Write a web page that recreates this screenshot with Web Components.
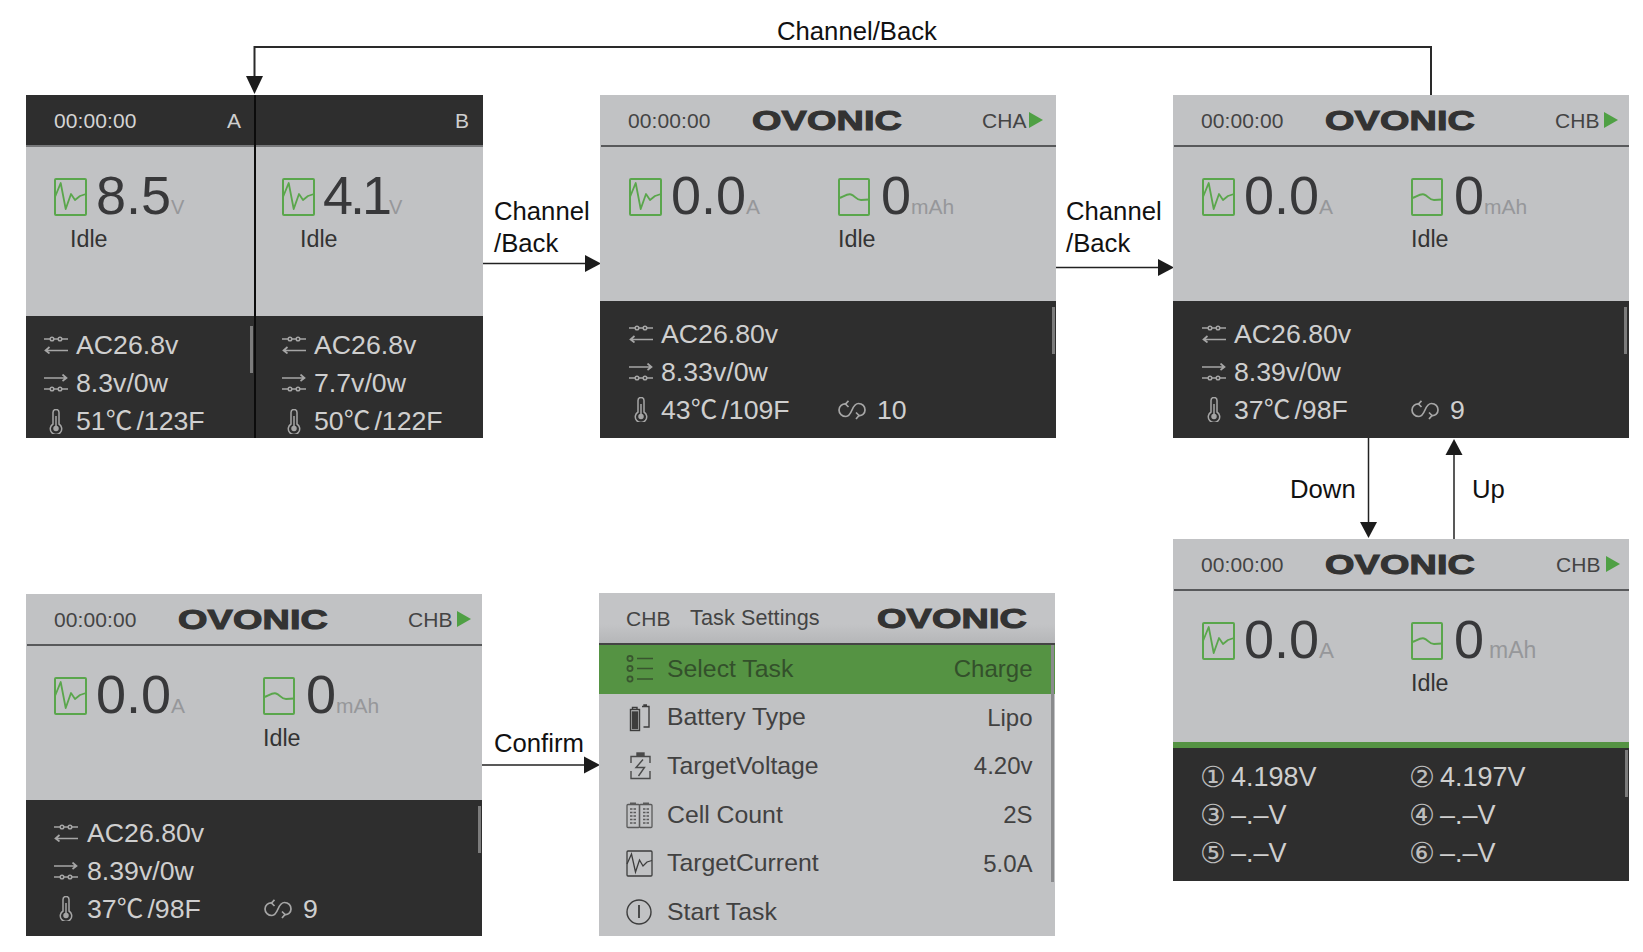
<!DOCTYPE html>
<html lang="en"><head><meta charset="utf-8"><title>OVONIC charger screens</title>
<style>
html,body{margin:0;background:#fff;font-family:"Liberation Sans",Arial,sans-serif}
ov-stat b{font-weight:normal;letter-spacing:4px}
</style></head><body>
<ov-diagram>
  <ov-label style="--x:777px;--y:31px">Channel/Back</ov-label>
  <ov-label style="--x:494px;--y:211px">Channel</ov-label>
  <ov-label style="--x:494px;--y:243px">/Back</ov-label>
  <ov-label style="--x:1066px;--y:211px">Channel</ov-label>
  <ov-label style="--x:1066px;--y:243px">/Back</ov-label>
  <ov-label style="--x:1290px;--y:489px">Down</ov-label>
  <ov-label style="--x:1472px;--y:489px">Up</ov-label>
  <ov-label style="--x:494px;--y:743px">Confirm</ov-label>

  <ov-frame style="--x:26px;--y:95px;--w:457px">
    <ov-pane style="--main:170px;--w:228px;--edge:2px">
      <ov-topbar slot="top" mode="letter" time="00:00:00" letter="A" style="--letter-x:201px"></ov-topbar>
      <ov-readings slot="main" style="--pad:28px;--col:180px">
        <ov-reading icon="pulse" value="8.5" unit="V" idle="Idle" style="--idle-x:16px;--unit-size:20px"></ov-reading>
      </ov-readings>
      <ov-stats slot="foot" style="--top:10px;--bar-x:224px;--bar-y:10px">
        <ov-stat icon="in" style="--icon:18px;--text:50px">AC26.8v</ov-stat>
        <ov-stat icon="out" style="--icon:18px;--text:50px">8.3v/0w</ov-stat>
        <ov-stat icon="temp" style="--icon:18px;--text:50px">51<b>℃</b>/123F</ov-stat>
      </ov-stats>
    </ov-pane>
    <ov-pane style="--main:170px;--w:227px">
      <ov-topbar slot="top" mode="letter" letter="B" style="--letter-x:199px"></ov-topbar>
      <ov-readings slot="main" style="--pad:26px;--col:180px">
        <ov-reading icon="pulse" value="4.1" unit="V" idle="Idle" style="--idle-x:18px;--unit-size:20px;--n-ls:-3px;--n-gap:8px"></ov-reading>
      </ov-readings>
      <ov-stats slot="foot" style="--top:10px;--bar-x:-100px">
        <ov-stat icon="in" style="--icon:26px;--text:58px">AC26.8v</ov-stat>
        <ov-stat icon="out" style="--icon:26px;--text:58px">7.7v/0w</ov-stat>
        <ov-stat icon="temp" style="--icon:26px;--text:58px">50<b>℃</b>/122F</ov-stat>
      </ov-stats>
    </ov-pane>
  </ov-frame>

  <ov-frame style="--x:600px;--y:95px;--w:456px">
    <ov-pane style="--main:155px">
      <ov-topbar slot="top" time="00:00:00" channel="CHA" style="--ch:382px"></ov-topbar>
      <ov-readings slot="main">
        <ov-reading icon="pulse" value="0.0" unit="A"></ov-reading>
        <ov-reading icon="curve" value="0" unit="mAh" idle="Idle"></ov-reading>
      </ov-readings>
      <ov-stats slot="foot">
        <ov-stat icon="in" style="--text:61px">AC26.80v</ov-stat>
        <ov-stat icon="out" style="--text:61px">8.33v/0w</ov-stat>
        <ov-stat icon="temp" extra="10" style="--text:61px">43<b>℃</b>/109F</ov-stat>
      </ov-stats>
    </ov-pane>
  </ov-frame>

  <ov-frame style="--x:1173px;--y:95px;--w:456px">
    <ov-pane style="--main:155px">
      <ov-topbar slot="top" time="00:00:00" channel="CHB" style="--ch:382px;--tri:2px"></ov-topbar>
      <ov-readings slot="main">
        <ov-reading icon="pulse" value="0.0" unit="A"></ov-reading>
        <ov-reading icon="curve" value="0" unit="mAh" idle="Idle"></ov-reading>
      </ov-readings>
      <ov-stats slot="foot" style="--bar-x:451px">
        <ov-stat icon="in" style="--text:61px">AC26.80v</ov-stat>
        <ov-stat icon="out" style="--text:61px">8.39v/0w</ov-stat>
        <ov-stat icon="temp" extra="9" style="--text:61px">37<b>℃</b>/98F</ov-stat>
      </ov-stats>
    </ov-pane>
  </ov-frame>

  <ov-frame style="--x:1173px;--y:539px;--w:456px;--h:342px">
    <ov-pane style="--main:152px">
      <ov-topbar slot="top" time="00:00:00" channel="CHB" style="--ch:383px;--tri:2.500px"></ov-topbar>
      <ov-readings slot="main">
        <ov-reading icon="pulse" value="0.0" unit="A" style="--unit-size:22.500px"></ov-reading>
        <ov-reading icon="curve" value="0" unit="mAh" idle="Idle" style="--unit-size:23px;--unit-gap:5px"></ov-reading>
      </ov-readings>
      <ov-stats slot="foot" accent style="--top:10px;--bar-x:452px;--bar-y:2px">
        <ov-cell-grid>
          <ov-cell mark="①">4.198V</ov-cell><ov-cell mark="②">4.197V</ov-cell>
          <ov-cell mark="③">–.–V</ov-cell><ov-cell mark="④">–.–V</ov-cell>
          <ov-cell mark="⑤">–.–V</ov-cell><ov-cell mark="⑥">–.–V</ov-cell>
        </ov-cell-grid>
      </ov-stats>
    </ov-pane>
  </ov-frame>

  <ov-frame style="--x:26px;--y:594px;--w:456px;--h:342px">
    <ov-pane style="--main:155px">
      <ov-topbar slot="top" time="00:00:00" channel="CHB" style="--ch:382px;--tri:2px"></ov-topbar>
      <ov-readings slot="main" style="--pad:28px">
        <ov-reading icon="pulse" value="0.0" unit="A"></ov-reading>
        <ov-reading icon="curve" value="0" unit="mAh" idle="Idle"></ov-reading>
      </ov-readings>
      <ov-stats slot="foot">
        <ov-stat icon="in" style="--icon:28px;--text:61px">AC26.80v</ov-stat>
        <ov-stat icon="out" style="--icon:28px;--text:61px">8.39v/0w</ov-stat>
        <ov-stat icon="temp" extra="9" style="--icon:28px;--text:61px">37<b>℃</b>/98F</ov-stat>
      </ov-stats>
    </ov-pane>
  </ov-frame>

  <ov-frame style="--x:599px;--y:593px;--w:456px">
    <ov-menu>
      <ov-topbar slot="top" mode="menu" channel="CHB" title="Task Settings"></ov-topbar>
      <ov-row icon="list" label="Select Task" value="Charge" active></ov-row>
      <ov-row icon="battery" label="Battery Type" value="Lipo"></ov-row>
      <ov-row icon="bolt" label="TargetVoltage" value="4.20v"></ov-row>
      <ov-row icon="cells" label="Cell Count" value="2S"></ov-row>
      <ov-row icon="wave" label="TargetCurrent" value="5.0A"></ov-row>
      <ov-row icon="power" label="Start Task"></ov-row>
    </ov-menu>
  </ov-frame>
</ov-diagram>

<script>
const ICONS = {
  pulse:`<svg width="33" height="38" viewBox="0 0 33 38" fill="none" stroke="#5aa64c"><rect x="1" y="1" width="31" height="36" rx="1" stroke-width="2"/><path d="M1 19 6.7 5 11.7 31 17 16 21 22 26 18 32 16" stroke-width="1.8" stroke-linejoin="round"/></svg>`,
  curve:`<svg width="32" height="38" viewBox="0 0 32 38" fill="none" stroke="#5aa64c" stroke-width="2"><rect x="1" y="1" width="30" height="36" rx="1"/><path d="M1 20C5 19 9 15.500 13 16.500C17 17.500 18 22 23 22L31 21.500"/></svg>`,
  in:`<svg width="24" height="18" viewBox="0 0 24 18" fill="none" stroke="#a6a6a6" stroke-width="1.500"><path d="M0 3H24"/><circle cx="8" cy="3" r="1.800" fill="#2e2e2e"/><circle cx="16" cy="3" r="1.800" fill="#2e2e2e"/><path d="M24 14.500H1.500M5.500 11 1.500 14.500 5.500 17.500" stroke-width="1.700"/></svg>`,
  out:`<svg width="24" height="18" viewBox="0 0 24 18" fill="none" stroke="#a6a6a6" stroke-width="1.500"><path d="M0 4H22.500M18.500 .5 22.500 4 18.500 7" stroke-width="1.700"/><path d="M0 15H24"/><circle cx="8" cy="15" r="1.800" fill="#2e2e2e"/><circle cx="16" cy="15" r="1.800" fill="#2e2e2e"/></svg>`,
  temp:`<svg width="24" height="25" viewBox="0 0 24 25" fill="none" stroke="#a6a6a6" stroke-width="1.500"><path d="M9 15V3.500A3 3 0 0 1 15 3.500V15A5.700 5.700 0 1 1 9 15Z"/><circle cx="12" cy="19.500" r="2" fill="#a6a6a6"/><path d="M12 7V17"/></svg>`,
  cycle:`<svg width="28" height="20" viewBox="0 0 28 20" fill="none" stroke="#a6a6a6" stroke-width="1.700"><path d="M9 4C4 3 1 6.500 1 10C1 13.500 4 16.500 8 16.500C11 16.500 12.500 13.500 14 10C15.500 6.500 17 3.500 20.500 3.500C24.500 3.500 27 6.500 27 10C27 13.500 24 16.500 20 15.500"/><path d="M10.500 .8 7.500 4 10.500 7M18 12.500 21 15.500 18 19"/></svg>`,
  list:`<svg width="28" height="28" viewBox="0 0 28 28" fill="none" stroke="#39552f" stroke-width="1.700"><circle cx="4" cy="3.500" r="2.600"/><circle cx="4" cy="13.500" r="2.600"/><circle cx="4" cy="24" r="2.600"/><path d="M11 3.500H27M11 13.500H27M11 24H27"/></svg>`,
  battery:`<svg width="28" height="28" viewBox="0 0 28 28" fill="none" stroke="#3d3d3d" stroke-width="1.400"><rect x="4.500" y="5.500" width="9" height="21"/><rect x="6.500" y="8" width="5" height="16.500" fill="#3d3d3d"/><path d="M6.500 5V3.500H11V5M16 2.500H23V23H17.500M18 2.500V1H21" /></svg>`,
  bolt:`<svg width="28" height="28" viewBox="0 0 28 28" fill="none" stroke="#4a4a4a" stroke-width="1.400"><path d="M5 11V4.500H24V11M5 19V26.500H24V19"/><rect x="11" y="1" width="7" height="3" fill="#4a4a4a"/><path d="M17 7.500 10 15.500H18.500L12.500 24"/></svg>`,
  cells:`<svg width="28" height="28" viewBox="0 0 28 28" fill="none" stroke="#5a5a5a" stroke-width="1.300"><rect x="1" y="3.500" width="12.500" height="23" rx="1"/><rect x="13.500" y="3.500" width="12.500" height="23" rx="1"/><path d="M4 2.500H10M17 2.500H23" stroke-width="1.800"/><path d="M4 8H10M4 11.500H10M4 15H10M4 18.500H10M4 22H10M17 8H23M17 11.500H23M17 15H23M17 18.500H23M17 22H23" stroke-dasharray="2.500 1"/></svg>`,
  wave:`<svg width="28" height="28" viewBox="0 0 28 28" fill="none" stroke="#3d3d3d" stroke-width="1.300"><rect x="1" y="1" width="25" height="25" rx="1"/><path d="M1 14 5.500 4 9.500 22 13.500 10 17 16 21 12 26 10.500"/></svg>`,
  power:`<svg width="28" height="28" viewBox="0 0 28 28" fill="none" stroke="#3d3d3d" stroke-width="1.400"><circle cx="13" cy="14" r="12"/><path d="M13 7V20" stroke-width="1.800"/></svg>`
};

function define(name, css, render){
  customElements.define(name, class extends HTMLElement{
    connectedCallback(){
      if(this.shadowRoot) return;
      const a = n => this.getAttribute(n);
      this.attachShadow({mode:'open'}).innerHTML = `<style>${css}</style>${render(a,this)}`;
    }
  });
}

define('ov-diagram', `
  :host{display:block;position:relative;width:1643px;height:952px;overflow:hidden;background:#fff}
  svg{position:absolute;left:0;top:0}
`, ()=>`<svg width="1643" height="952" viewBox="0 0 1643 952" fill="#1c1c1c" stroke="none">
  <path d="M1431 95V47H254.500V78" fill="none" stroke="#2a2a2a" stroke-width="2"/>
  <path d="M246 76H263L254.500 94Z"/>
  <path d="M483 263.500H588" stroke="#222" stroke-width="1.500"/><path d="M585 255 601 263.500 585 272Z"/>
  <path d="M1056 267.500H1162" stroke="#222" stroke-width="1.500"/><path d="M1158 259 1174 267.500 1158 276Z"/>
  <path d="M482 765H588" stroke="#222" stroke-width="1.500"/><path d="M584 756.500 600 765 584 773.500Z"/>
  <path d="M1368.500 438V525" stroke="#222" stroke-width="1.500"/><path d="M1360 522H1377L1368.500 538Z"/>
  <path d="M1454 539V452" stroke="#222" stroke-width="1.500"/><path d="M1445.500 455H1462.500L1454 439Z"/>
</svg><slot></slot>`);

define('ov-label', `
  :host{position:absolute;left:var(--x);top:calc(var(--y) - 15px);display:block;font:25.700px/30px "Liberation Sans",Arial,sans-serif;color:#111;white-space:nowrap}
`, ()=>`<slot></slot>`);

define('ov-frame', `
  :host{position:absolute;left:var(--x);top:var(--y);width:var(--w);height:var(--h,343px);display:flex;overflow:hidden;z-index:1}
`, ()=>`<slot></slot>`);

define('ov-pane', `
  :host{display:grid;grid-template-columns:minmax(0,1fr);grid-template-rows:52px calc(var(--main) - 1px) 1fr;flex:none;width:var(--w,100%);height:100%;box-sizing:content-box;border-right:var(--edge,0) solid #0c0c0c;background:#c1c2c4}
`, ()=>`<slot name="top"></slot><slot name="main"></slot><slot name="foot"></slot>`);

define('ov-logo', `
  :host{display:block;width:150px;height:36px}
  svg{display:block;overflow:visible}
  text{font:bold 28.500px "Liberation Sans",Arial,sans-serif;fill:#333;stroke:#333;stroke-width:1.100px}
`, ()=>`<svg width="150" height="36" viewBox="0 0 150 36"><text x="0" y="28" textLength="150" lengthAdjust="spacingAndGlyphs">OVONIC</text></svg>`);

define('ov-topbar', `
  :host{display:flex;align-items:center;position:relative;font:21px/1 "Liberation Sans",Arial,sans-serif;letter-spacing:.1px;color:#444;box-sizing:border-box;height:52px;padding-bottom:2px;background:transparent}
  :host::after{content:"";position:absolute;left:1px;right:0;bottom:0;height:2px;background:#58595b}
  :host([mode=letter]){background:#2e2e2e;color:#d4d4d4}
  :host([mode=letter])::after{left:0;background:#77787a}
  :host([mode=menu]){background:linear-gradient(#c3c4c6 0 60%,#b4b5b7);}
  :host([mode=menu])::after{left:0;background:#444}
  .time{position:absolute;left:28px}
  ov-logo{position:absolute;left:152px}
  .ch{position:absolute;left:var(--ch)}
  .tri{position:absolute;left:calc(var(--ch) + 47px + var(--tri,0px));width:0;height:0;border-left:14px solid #4fa044;border-top:8.500px solid transparent;border-bottom:8.500px solid transparent}
  .letter{position:absolute;left:var(--letter-x);color:#cfcfcf}
  .mch{position:absolute;left:27px}
  .mt{position:absolute;left:91px;font-size:21.600px}
  .mlogo{left:278px}
`, (a)=>{
  const m=a('mode');
  if(m==='letter') return `${a('time')?`<span class="time">${a('time')}</span>`:''}<span class="letter">${a('letter')}</span>`;
  if(m==='menu') return `<span class="mch">${a('channel')}</span><span class="mt">${a('title')}</span><ov-logo class="mlogo"></ov-logo>`;
  return `<span class="time">${a('time')}</span><ov-logo></ov-logo><span class="ch">${a('channel')}</span><span class="tri"></span>`;
});

define('ov-readings', `
  :host{display:grid;grid-template-columns:var(--col,209px) 1fr;padding:31px 0 0 var(--pad,29px);box-sizing:border-box;align-content:start}
`, ()=>`<slot></slot>`);

define('ov-reading', `
  :host{display:block;color:#38383a;font-family:"Liberation Sans",Arial,sans-serif}
  .top{display:flex;align-items:flex-start;height:38px;white-space:nowrap}
  .n{margin-left:var(--n-gap,9px);font-size:54px;line-height:35px;letter-spacing:var(--n-ls,0)}
  :host([icon=curve]) .n{margin-left:11px}
  .u{font-size:var(--unit-size,21px);line-height:1;letter-spacing:0;color:#96979a;margin-left:var(--unit-gap,0)}
  .idle{margin:11px 0 0 var(--idle-x,0);font-size:23.300px;line-height:24px;color:#333}
`, (a)=>`<div class="top">${ICONS[a('icon')]}<span class="n">${a('value')}<span class="u">${a('unit')}</span></span></div>${a('idle')?`<div class="idle">${a('idle')}</div>`:''}`);

define('ov-stats', `
  :host{display:block;position:relative;background:#2e2e2e;padding:var(--top,13.500px) 0 0;box-sizing:border-box;overflow:hidden;height:100%}
  :host([accent]){border-top:6px solid #559343}
  .bar{position:absolute;left:var(--bar-x,452px);top:var(--bar-y,6px);width:3px;height:47px;background:#7c7c7c}
`, ()=>`<slot></slot><div class="bar"></div>`);

define('ov-stat', `
  :host{display:block;position:relative;height:38px;font:26.700px/38px "Liberation Sans","Noto Sans CJK SC",Arial,sans-serif;color:#cfcfcf;white-space:nowrap}
  .row{display:grid;grid-template-columns:var(--text,62px) 1fr;height:100%}
  .ic{display:flex;align-items:center;padding-left:var(--icon,29px)}
  .ic svg{flex:none}
  .body{display:grid;grid-template-columns:177px 1fr}
  .cy{display:flex;align-items:center;gap:11px}
`, (a)=>`<div class="row"><div class="ic">${ICONS[a('icon')]}</div><div class="body"><span><slot></slot></span>${a('extra')?`<span class="cy">${ICONS.cycle}<span>${a('extra')}</span></span>`:''}</div></div>`);

define('ov-cell-grid', `
  :host{display:grid;grid-template-columns:209px 1fr;padding-left:28px}
`, ()=>`<slot></slot>`);

define('ov-cell', `
  :host{display:grid;grid-template-columns:30px 1fr;height:38px;font:27px/38px "Liberation Sans",Arial,sans-serif;color:#cfcfcf;white-space:nowrap}
  .m{font:29px/38px "DejaVu Sans",sans-serif;color:#bdbdbd;margin-left:-1px}
`, (a)=>`<span class="m">${a('mark')}</span><span><slot></slot></span>`);

define('ov-menu', `
  :host{display:grid;grid-template-rows:52px repeat(6,48.600px);width:100%;background:#c1c2c4;position:relative}
  .bar{position:absolute;right:1px;top:52px;width:3px;height:237px;background:#8a8b8d}
`, ()=>`<slot name="top"></slot><slot></slot><div class="bar"></div>`);

define('ov-row', `
  :host{display:grid;grid-template-columns:41px 1fr auto;align-items:center;padding:0 22.500px 0 27px;font:24px/1 "Liberation Sans",Arial,sans-serif;color:#414141}
  :host([active]){background:#559343;color:#33502b}
  svg{display:block}
  .l{font-size:24.800px}
`, (a)=>`${ICONS[a('icon')]}<span class="l">${a('label')}</span><span>${a('value')||''}</span>`);
</script>
</body></html>
